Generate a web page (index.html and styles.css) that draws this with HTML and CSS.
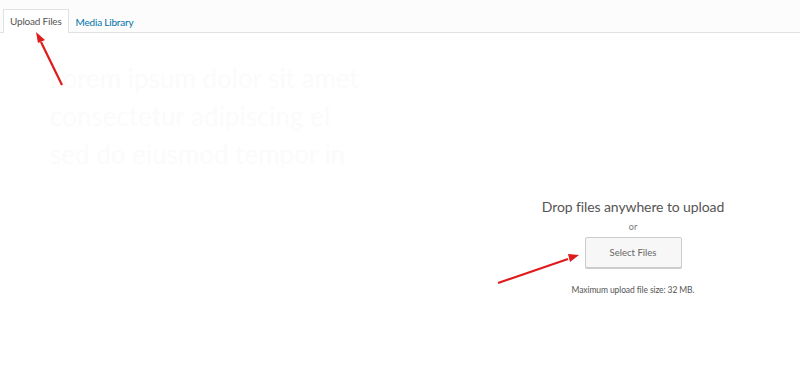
FILE: index.html
```html
<!DOCTYPE html>
<html>
<head>
<meta charset="utf-8">
<title>Upload Files</title>
<link rel="stylesheet" href="styles.css">
</head>
<body>
<div class="frame">
  <div class="router">
    <a class="tab active" href="#">Upload Files</a>
    <a class="tab" href="#">Media Library</a>
  </div>
  <div class="content">
    <div class="ghost">
      <p>Lorem ipsum dolor sit amet</p>
      <p>consectetur adipiscing el</p>
      <p>sed do eiusmod tempor in</p>
    </div>
    <div class="uploader">
      <h2 class="upload-title">Drop files anywhere to upload</h2>
      <p class="upload-or">or</p>
      <button class="select-btn" type="button">Select Files</button>
      <p class="max-size">Maximum upload file size: 32 MB.</p>
    </div>
  </div>
  <svg class="arrows" width="800" height="374" viewBox="0 0 800 374">
    <line x1="62" y1="85" x2="41" y2="42" stroke="#e01b1b" stroke-width="2.2"/>
    <polygon points="36,32 45,40 38,43" fill="#e01b1b"/>
    <line x1="498" y1="283" x2="568" y2="259" stroke="#e01b1b" stroke-width="2.2"/>
    <polygon points="579,255 568,254 570,262" fill="#e01b1b"/>
  </svg>
</div>
</body>
</html>
```

FILE: styles.css
```css
body, p, h2, button {
	margin:0;
	padding:0;
}
body {
	background:#fff;
	font:11px/1.4 Lato, "Open Sans", sans-serif;
	color:#444;
}
.frame {
	position:relative;
	width:800px;
	height:374px;
	overflow:hidden;
}
.router {
	display:flex;
	align-items:flex-end;
	height:32px;
	padding-left:3px;
	background:#fcfcfc;
	border-bottom:1px solid #e1e1e1;
}
.tab {
	display:block;
	height:22px;
	padding:0 6px;
	line-height:22px;
	font-size:10px;
	letter-spacing:-0.2px;
	text-decoration:none;
	color:#0073aa;
	border:1px solid transparent;
	border-bottom:0;
	margin-bottom:-1px;
}
.tab.active {
	color:#555;
	background:#fff;
	border-color:#e1e1e1;
	height:23px;
}
.content {
	display:flex;
	height:341px;
}
.ghost {
	width:440px;
	padding:26px 0 0 50px;
	box-sizing:border-box;
	color:#fbfbfb;
	font-size:26px;
	line-height:38px;
	white-space:nowrap;
}
.uploader {
	width:300px;
	margin-left:43px;
	padding-top:164px;
	text-align:center;
}
.upload-title {
	font-weight:400;
	font-size:14px;
	letter-spacing:-0.1px;
	line-height:20px;
	color:#555;
}
.upload-or {
	margin-top:4px;
	font-size:9px;
	line-height:12px;
	color:#777;
}
.select-btn {
	margin-top:4px;
	width:97px;
	height:31px;
	font:inherit;
	font-size:9.5px;
	color:#666;
	background:#f7f7f7;
	border:1px solid #ccc;
	border-radius:2px;
	box-shadow:0 1px 0 #ccc;
}
.max-size {
	margin-top:16px;
	font-size:8.5px;
	letter-spacing:-0.1px;
	line-height:12px;
	color:#555;
}
.arrows {
	position:absolute;
	left:0;
	top:0;
	pointer-events:none;
}
```
